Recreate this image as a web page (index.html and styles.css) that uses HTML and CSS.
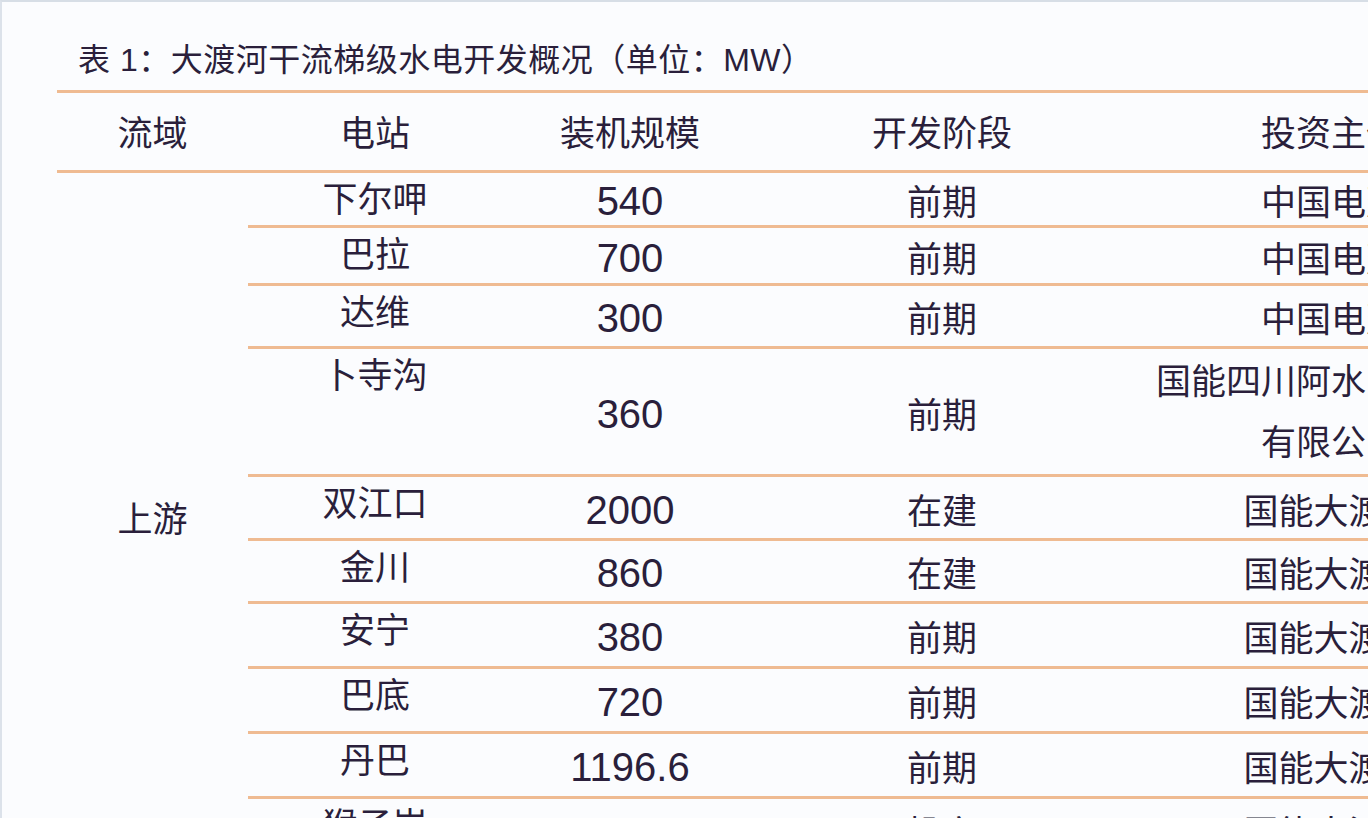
FILE: index.html
```html
<!DOCTYPE html>
<html lang="zh-CN">
<head>
<meta charset="utf-8">
<title>表 1：大渡河干流梯级水电开发概况</title>
<link rel="stylesheet" href="styles.css">
</head>
<body>
<div class="frame">
  <h1 class="title">表 1：大渡河干流梯级水电开发概况（单位：MW）</h1>
  <table class="hydro">
    <colgroup>
      <col class="c-basin"><col class="c-station"><col class="c-cap"><col class="c-stage"><col class="c-owner">
    </colgroup>
    <thead>
      <tr class="r-head">
        <th>流域</th><th>电站</th><th>装机规模</th><th>开发阶段</th><th>投资主体</th>
      </tr>
    </thead>
    <tbody>
      <tr class="r-55">
        <td class="basin" rowspan="10">上游</td>
        <td class="station">下尔呷</td><td class="num">540</td><td class="stage">前期</td><td class="owner">中国电建</td>
      </tr>
      <tr class="r-58">
        <td class="station">巴拉</td><td class="num">700</td><td class="stage">前期</td><td class="owner">中国电建</td>
      </tr>
      <tr class="r-63">
        <td class="station">达维</td><td class="num">300</td><td class="stage">前期</td><td class="owner">中国电建</td>
      </tr>
      <tr class="r-128">
        <td class="station">卜寺沟</td><td class="num">360</td><td class="stage">前期</td><td class="owner two-line">国能四川阿水电力开发<br>有限公司</td>
      </tr>
      <tr class="r-64">
        <td class="station">双江口</td><td class="num">2000</td><td class="stage">在建</td><td class="owner">国能大渡河</td>
      </tr>
      <tr class="r-63">
        <td class="station">金川</td><td class="num">860</td><td class="stage">在建</td><td class="owner">国能大渡河</td>
      </tr>
      <tr class="r-65">
        <td class="station">安宁</td><td class="num">380</td><td class="stage">前期</td><td class="owner">国能大渡河</td>
      </tr>
      <tr class="r-65">
        <td class="station">巴底</td><td class="num">720</td><td class="stage">前期</td><td class="owner">国能大渡河</td>
      </tr>
      <tr class="r-65">
        <td class="station">丹巴</td><td class="num">1196.6</td><td class="stage">前期</td><td class="owner">国能大渡河</td>
      </tr>
      <tr class="r-65">
        <td class="station">猴子岩</td><td class="num">1700</td><td class="stage">投产</td><td class="owner">国能大渡河</td>
      </tr>
    </tbody>
  </table>
</div>
</body>
</html>
```

FILE: styles.css
```css
html, body {
  margin: 0;
  padding: 0;
}

body {
  width: 1368px;
  height: 818px;
  overflow: hidden;
  background: #fbfcfe;
  color: #2a1f3b;
  font-family: "Liberation Sans", "Noto Sans CJK SC", sans-serif;
  font-weight: 400;
}

.frame {
  height: 816px;
  border-top: 2px solid #d7dee6;
  border-left: 2px solid #dce2ea;
  overflow: hidden;
}

.title {
  margin: 0 0 10px 0;
  padding: 38px 0 0 76px;
  height: 40px;
  line-height: 40px;
  font-size: 32px;
  font-weight: 400;
  letter-spacing: 0.5px;
  white-space: nowrap;
}

.hydro {
  margin-left: 55px;
  width: 1479px;
  table-layout: fixed;
  border-collapse: separate;
  border-spacing: 0;
  border-top: 3px solid #efbb92;
}

.c-basin { width: 191px; }
.c-station { width: 254px; }
.c-cap { width: 256px; }
.c-stage { width: 368px; }
.c-owner { width: 410px; }

.hydro th,
.hydro td {
  box-sizing: border-box;
  padding: 0;
  text-align: center;
  vertical-align: middle;
  font-size: 35px;
  font-weight: 400;
  line-height: 42px;
  white-space: nowrap;
  border-bottom: 3px solid #efbb92;
}

.hydro th {
  height: 80px;
  padding-top: 4px;
}

.hydro td.basin {
  border-bottom: none;
  padding-top: 2px;
}

.hydro td.station {
  vertical-align: top;
  padding-top: 6px;
}

.hydro td.num {
  font-size: 40px;
  padding-top: 4px;
}

.hydro td.stage,
.hydro td.owner {
  padding-top: 8px;
}

.hydro td.two-line {
  line-height: 61px;
  padding-top: 0;
}

.r-55 td { height: 55px; }
.r-58 td { height: 58px; }
.r-63 td { height: 63px; }
.r-64 td { height: 64px; }
.r-65 td { height: 65px; }
.r-128 td { height: 128px; }
.r-55 td.basin { height: auto; }
```
